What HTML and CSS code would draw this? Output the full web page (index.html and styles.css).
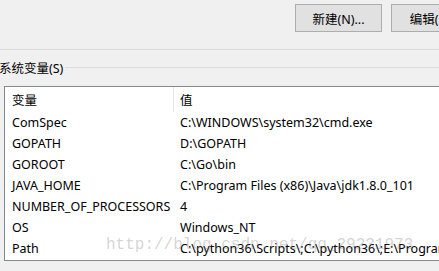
FILE: index.html
```html
<!DOCTYPE html>
<html lang="zh-CN">
  <head>
    <meta charset="UTF-8" />
    <title>环境变量</title>
    <link rel="stylesheet" href="styles.css">
  </head>
  <body>
    <div class="window">
      <div class="toolbar">
        <button class="btn">新建(N)...</button>
        <button class="btn">编辑(E)...</button>
      </div>
      <div class="divider"></div>

      <div class="group-title">
        <span>系统变量(S)</span>
        <div class="group-line"></div>
      </div>

      <div class="listbox">
        <div class="row header">
          <div class="col name">变量</div>
          <div class="col value">值</div>
        </div>
        <div class="row">
          <div class="col name">ComSpec</div>
          <div class="col value">C:\WINDOWS\system32\cmd.exe</div>
        </div>
        <div class="row">
          <div class="col name">GOPATH</div>
          <div class="col value">D:\GOPATH</div>
        </div>
        <div class="row">
          <div class="col name">GOROOT</div>
          <div class="col value">C:\Go\bin</div>
        </div>
        <div class="row">
          <div class="col name">JAVA_HOME</div>
          <div class="col value">C:\Program Files (x86)\Java\jdk1.8.0_101</div>
        </div>
        <div class="row">
          <div class="col name">NUMBER_OF_PROCESSORS</div>
          <div class="col value">4</div>
        </div>
        <div class="row">
          <div class="col name">OS</div>
          <div class="col value">Windows_NT</div>
        </div>
        <div class="row">
          <div class="col name">Path</div>
          <div class="col value">C:\python36\Scripts\;C:\python36\;E:\Program Files\Git\cmd</div>
        </div>
        <div class="watermark">http://blog.csdn.net/qq_29231973</div>
      </div>
    </div>
  </body>
</html>
```

FILE: styles.css
```css
html, body {
  margin: 0;
  padding: 0;
}
body {
  font-family: "Noto Sans", "Noto Sans CJK SC", sans-serif;
  font-size: 12.5px;
  color: #000;
  background-color: #f0f0f0;
}
.window {
  width: 439px;
  height: 271px;
  overflow: hidden;
}
.toolbar {
  display: flex;
  gap: 9px;
  padding: 4px 0 0 295px;
  height: 49px;
  box-sizing: border-box;
  overflow: hidden;
}
.btn {
  flex-shrink: 0;
  width: 87px;
  height: 28px;
  background-color: #e1e1e1;
  border: 1px solid #adadad;
  font-family: inherit;
  font-size: 12.5px;
  color: #000;
  padding: 0;
  white-space: nowrap;
}
.divider {
  height: 1px;
  background-color: #dadada;
}
.group-title {
  display: flex;
  align-items: center;
  height: 20px;
  margin-top: 7px;
  margin-bottom: 9px;
}
.group-title span {
  margin-left: -1px;
  padding-right: 2px;
  white-space: nowrap;
}
.group-line {
  flex: 1;
  height: 1px;
  background-color: #dcdcdc;
}
.listbox {
  position: relative;
  margin-left: 4px;
  width: 460px;
  height: 173px;
  background-color: #fff;
  border: 1px solid #828790;
  overflow: hidden;
}
.row {
  display: flex;
  height: 21px;
  align-items: center;
  white-space: nowrap;
}
.row.header {
  height: 25px;
}
.col.name {
  flex-shrink: 0;
  width: 161px;
  padding-left: 7px;
}
.col.value {
  flex-shrink: 0;
  padding-left: 7px;
}
.header .col.value {
  align-self: stretch;
  display: flex;
  align-items: center;
  border-left: 1px solid #e5e5e5;
  padding-left: 6px;
}
.watermark {
  position: absolute;
  left: 101px;
  top: 149px;
  font-family: "Liberation Mono", monospace;
  font-size: 16px;
  color: rgba(110, 110, 110, 0.3);
  white-space: nowrap;
  pointer-events: none;
}
```
